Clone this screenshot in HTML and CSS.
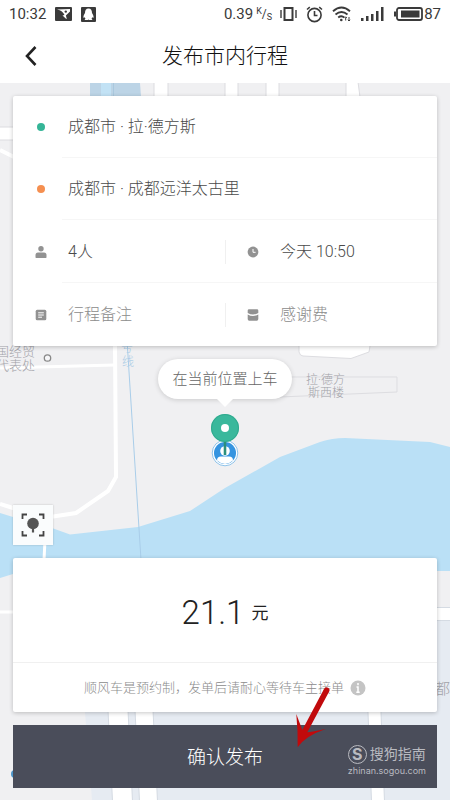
FILE: index.html
```html
<!DOCTYPE html>
<html lang="zh-CN">
<head>
<meta charset="utf-8">
<meta name="viewport" content="width=device-width, initial-scale=1">
<title>发布市内行程</title>
<link rel="stylesheet" href="styles.css">
</head>
<body>
<div class="status">
  <div class="status-group status-left">
    <span>10:32</span>
    <svg width="17" height="14" viewBox="0 0 17 14"><rect width="17" height="14" rx="1" fill="#3a3a3a"/><path d="M2 2.500C6 3 8.500 5.500 9.500 8L7.500 8.500l3.500 3.300.8.200-.9-3.500L15 4.500V2z" fill="#fff"/><circle cx="10.800" cy="4.600" r="1.200" fill="#3a3a3a"/></svg>
    <svg class="qq" width="15" height="15" viewBox="0 0 15 15"><rect width="15" height="15" rx="1" fill="#3a3a3a"/><path d="M7.500 1.500C5 1.500 4 3.500 4 6 3 7.500 2 9.500 2.600 11l1.200-.8.600 1.500-.9 1.300h3.300l.7-.4.700.4h3.300l-.9-1.300.6-1.500 1.200.8c.6-1.500-.4-3.500-1.400-5 0-2.500-1-4.500-3.500-4.500z" fill="#fff"/></svg>
  </div>
  <div class="status-group">
    <span>0.39</span>
    <span class="rate"><sup>K</sup>/<sub>S</sub></span>
    <svg class="vibrate" width="17" height="16" viewBox="0 0 17 16" fill="none" stroke="#3a3a3a"><path d="M4.500 2h8v12h-8z" stroke-width="2"/><path d="M1 4v8M16 4v8" stroke-width="1.400"/></svg>
    <svg class="alarm" width="17" height="17" viewBox="0 0 17 17" fill="none" stroke="#3a3a3a" stroke-width="1.600"><circle cx="8.500" cy="9" r="6.600"/><path d="M8.500 5v4.500h3M1 3.500L3.800 1.200M16 3.500l-2.800-2.300"/></svg>
    <svg class="wifi" width="20" height="16" viewBox="0 0 20 16" fill="none" stroke="#3a3a3a" stroke-width="1.900"><path d="M1 5.200Q9.500-2 18 5.200M3.500 8.500q6-4.800 12 0M6.200 11.500q3.300-2.500 6 0"/><circle cx="9.300" cy="14" r="1.300" fill="#3a3a3a" stroke="none"/><path d="M13.700 14.500v-3M17 11v4M12.500 12l1.200-1.200 1.200 1.200M15.800 13.800L17 15l1.200-1.200" stroke-width="1"/></svg>
    <svg class="signal" width="23" height="14" viewBox="0 0 23 14" fill="#3a3a3a"><path d="M0 11h2.500v3H0zM5 9h2.500v5H5zM10 7h2.500v7H10zM15 4h2.500v10H15zM20 0h2.500v14H20z"/></svg>
    <svg class="battery" width="29" height="14" viewBox="0 0 29 14"><rect x="3" y="1" width="25" height="12" rx="2" fill="none" stroke="#3a3a3a" stroke-width="1.800"/><path d="M0 4.500h2v5H0zM7 3.500h18.500v7H7z" fill="#3a3a3a"/></svg>
    <span class="percent">87</span>
  </div>
</div>
<header class="bar">
  <button class="back" type="button" aria-label="返回"><svg width="12" height="20" viewBox="0 0 12 20" fill="none" stroke="#222" stroke-width="2.600"><path d="M10.500 1L2 10l8.500 9"/></svg></button>
  <h1>发布市内行程</h1>
</header>
<main class="stage">
  <svg class="map" viewBox="0 83 450 717" preserveAspectRatio="xMidYMin slice" aria-hidden="true">
    <path fill="#f0f0f2" d="M0 83h450v717H0z"/>
    <path fill="#bcd4e6" d="M90 83h50l1 14H90z"/>
    <path fill="#c2e2f5" d="M101 83h10v14h-10z"/>
    <path stroke="#a9c8de" d="M113.500 83v14"/>
    <g fill="#fff" stroke="#dcdce0"><path d="M154 82h14v15h-14zM225 82h13v15h-13zM266 82h13v15h-13zM346 82h12l2 15h-14zM-1 127h15v13H-1z"/></g>
    <path fill="#bae0f6" d="M0 513l13 4 39 11 18 6.500 68-7.500 26-8 26-8 35-23 55-31 40-15q12-4 25-4l85 4 20 5v124H437L200 560 13 574 0 578z"/>
    <g fill="none" stroke="#fff" stroke-width="4"><path d="M0 150l14 7M115 346l1 131-8 14-32 22-26 4-37-9-13-4"/><path d="M45 540l-1 20M0 368l115-3M0 612h14" stroke-width="3"/></g>
    <path stroke="#a9cde9" d="M127 340l14 220"/>
    <path fill="#fff" stroke="#dddde1" d="M299 340v12q1 4 4 4l48 2.500 18-6.500 2-12z"/>
    <path fill="none" stroke="#dddde1" d="M280 377h117v15l-117 5"/>
    <path fill="#e6ebf2" d="M84 700h366v100H92zM430 621h20v90h-20z"/>
    <path fill="#fff" stroke="#d5dbe3" d="M430 607.500h21v13h-21zM107.500 700h20l5 101h-20zM134.500 700h18l5 101h-18zM367.500 700h13l4 101h-13z"/>
    <circle cx="15" cy="774" r="4" fill="#4b94c8"/>
    <circle cx="47.500" cy="358" r="3.200" fill="#f6f6f8" stroke="#888" stroke-width="1.300"/>
    <g class="map-label"><text x="-4" y="356">国经贸</text><text x="-4" y="370">代表处</text></g>
    <g class="map-label map-small"><text x="306" y="384">拉·德方</text><text x="308" y="397">斯西楼</text></g>
    <g class="map-label map-small map-metro"><text x="121" y="352">号</text><text x="122" y="366">线</text></g>
    <text class="map-label map-district" x="435" y="694">都</text>
  </svg>

  <section class="card trip">
    <button class="row" type="button"><span class="icon"><i class="dot dot-from"></i></span><span>成都市 · 拉·德方斯</span></button>
    <button class="row" type="button"><span class="icon"><i class="dot dot-to"></i></span><span>成都市 · 成都远洋太古里</span></button>
    <div class="pair">
      <button class="row" type="button"><span class="icon"><svg width="12" height="12" viewBox="0 0 12 12" fill="#929292"><circle cx="6" cy="2.800" r="2.700"/><path d="M1 12Q.5 12 .5 11V9q0-2.500 2.500-2.500h6q2.500 0 2.500 2.500v2q0 1-.5 1z"/></svg></span><span>4人</span></button>
      <button class="row" type="button"><span class="icon"><svg width="12" height="12" viewBox="0 0 12 12"><circle cx="6" cy="6" r="5.400" fill="#929292"/><path d="M6 3v3.300h2.600" fill="none" stroke="#fff"/></svg></span><span>今天 10:50</span></button>
    </div>
    <div class="pair">
      <button class="row hint" type="button"><span class="icon"><svg width="12" height="12" viewBox="0 0 12 12"><rect x=".7" y=".7" width="10.600" height="10.600" rx="1.500" fill="#929292"/><path d="M3.200 3.800h5.600M3.200 6h5.600M3.200 8.200H7" stroke="#fff"/></svg></span><span>行程备注</span></button>
      <button class="row hint" type="button"><span class="icon"><svg width="12" height="12" viewBox="0 0 12 12" fill="#929292"><path d="M.7 1.500Q.7.300 2 .3h8q1.300 0 1.300 1.200V4Q6 7 .7 4zM.7 5.400Q6 8.400 11.300 5.400V10q0 1.700-1.500 1.700H2.200Q.7 11.700.7 10z"/></svg></span><span>感谢费</span></button>
    </div>
  </section>

  <div class="pickup">
    <div class="bubble">在当前位置上车</div>
    <svg class="pin" width="32" height="56" viewBox="0 0 32 56"><circle cx="16" cy="41" r="12.800" fill="#fff" stroke="#8fc3ea"/><circle cx="16" cy="41" r="11" fill="#3594e0"/><circle cx="16" cy="39" r="4.800" fill="#fff"/><path d="M8 48.500q0-4 4-4h8q4 0 4 4-8 7-16 0z" fill="#fff"/><path d="M16 28v15" stroke="#2c8f7c" stroke-width="2.600"/><circle cx="16" cy="16" r="14" fill="#3ab89c"/><circle cx="16" cy="16" r="13.500" fill="none" stroke="#31aa8f"/><circle cx="16" cy="16" r="4" fill="#fff"/></svg>
  </div>

  <button class="locate" type="button" aria-label="定位"><svg width="24" height="24" viewBox="0 0 24 24"><path d="M1.500 6V1.500H6M18 1.500h4.500V6M22.500 18v4.500H18M6 22.500H1.500V18" fill="none" stroke="#444" stroke-width="1.800"/><circle cx="12" cy="10.500" r="5.800" fill="#555"/><path d="M12 14v5.500" stroke="#555" stroke-width="2.200"/></svg></button>

  <section class="card fare">
    <p class="price"><strong>21.1</strong><span>元</span></p>
    <p class="note"><span>顺风车是预约制，发单后请耐心等待车主接单</span><svg width="16" height="16" viewBox="0 0 16 16"><circle cx="8" cy="8" r="7.500" fill="#c4c4c4"/><path d="M8 3v2.200M6.500 7H8v5M6.300 12.200h3.400" fill="none" stroke="#fff" stroke-width="1.500"/></svg></p>
  </section>

  <div class="action">
    <button class="confirm" type="button">确认发布</button>
    <div class="watermark"><div class="brand"><i>S</i><span>搜狗指南</span></div><div class="site">zhinan.sogou.com</div></div>
    <svg class="arrow" width="38" height="62" viewBox="0 0 38 62"><path d="M30 3q1.500-2.500 4-1.200 2.300 1.200 1.300 3.500L13.300 46.300Q18 46 31.700 43 11 50 3.700 61.300 4 45 2.300 28L8.300 44z" fill="#c10a0c"/></svg>
  </div>
</main>
</body>
</html>
```
FILE: styles.css
```css
* { box-sizing: border-box; }

body {
  margin: 0;
  min-height: 100vh;
  display: flex;
  flex-direction: column;
  background: #fff;
  color: #4a4a4a;
  font: 300 16px/24px Roboto, "Noto Sans CJK SC", sans-serif;
}

button {
  margin: 0;
  padding: 0;
  border: 0;
  background: none;
  color: inherit;
  font: inherit;
  cursor: pointer;
}

svg { display: block; flex: none; }
p, h1 { margin: 0; }

.status {
  display: flex;
  justify-content: space-between;
  padding: 0 9px;
  color: #3a3a3a;
  font-size: 15px;
  font-weight: 400;
  line-height: 28px;
}

.status-group { display: flex; align-items: center; }
.status-left { gap: 9px; }
.rate { margin: 0 8px 0 3px; font-size: 12px; line-height: 16px; }
.rate sup, .rate sub { font-size: 9px; line-height: 0; }
.rate sup { vertical-align: 4px; }
.rate sub { vertical-align: -2px; }
.alarm, .wifi, .signal { margin-left: 9px; }
.battery { margin-left: 10px; }
.percent { margin-left: 1px; }

.bar {
  display: grid;
  grid-template-columns: 64px 1fr 64px;
  align-items: center;
  height: 55px;
}

.back { display: flex; align-items: center; height: 48px; padding-left: 25px; }

.bar h1 {
  color: #111;
  font-size: 21px;
  font-weight: 300;
  line-height: 32px;
  text-align: center;
}

.stage {
  position: relative;
  flex: 1;
  display: flex;
  flex-direction: column;
  padding: 13px 13px 12px;
  overflow: hidden;
}

.stage > * { position: relative; }

.stage > .map {
  position: absolute;
  inset: 0;
  width: 100%;
  height: 100%;
}

.map-label { fill: #a2a2a8; font-size: 13px; }
.map-small { font-size: 12px; }
.map-metro { fill: #a9cbe6; }
.map-district { font-size: 15px; }

.card {
  background: #fff;
  border-radius: 2px;
  box-shadow: 0 1px 4px rgba(0, 0, 0, 0.22);
}

.row {
  position: relative;
  display: flex;
  align-items: center;
  width: 100%;
  height: 62px;
  padding-left: 22px;
  gap: 21px;
  text-align: left;
}

.trip > :not(:last-child)::after {
  content: "";
  position: absolute;
  right: 0;
  bottom: 0;
  left: 49px;
  height: 1px;
  background: #f6f6f6;
}

.icon { display: flex; justify-content: center; width: 12px; }
.dot { width: 8px; height: 8px; border-radius: 50%; }
.dot-from { background: #35b597; }
.dot-to { background: #f58f50; }

.pair { position: relative; display: grid; grid-template-columns: 1fr 1fr; }
.pair .row { height: 63px; }
.pair .row + .row { background: linear-gradient(#f0f0f0, #f0f0f0) left center / 1px 24px no-repeat; }
.hint { color: #8c8c8c; }

.pickup {
  display: flex;
  flex-direction: column;
  align-items: center;
  gap: 13px;
  margin-top: 13px;
}

.bubble {
  position: relative;
  padding: 8px 14px;
  border-radius: 20px;
  background: #fff;
  color: #666;
  font-size: 15px;
  box-shadow: 0 1px 5px rgba(0, 0, 0, 0.16);
}

.bubble::after {
  content: "";
  position: absolute;
  top: 100%;
  left: 50%;
  margin-left: -8px;
  border: 8px solid transparent;
  border-top-color: #fff;
  border-bottom: 0;
}

.locate {
  display: flex;
  align-items: center;
  justify-content: center;
  width: 40px;
  height: 40px;
  margin-top: auto;
  background: #fafcfd;
  box-shadow: 0 0 2px rgba(0, 0, 0, 0.2);
}

.fare { margin-top: 13px; }

.price {
  display: flex;
  align-items: center;
  justify-content: center;
  gap: 7px;
  padding: 35px 0 29px;
  color: #222;
  line-height: 40px;
}

.price strong { font-size: 33px; font-weight: 300; }
.price span { font-size: 17px; font-weight: 400; }

.note {
  display: flex;
  align-items: center;
  justify-content: center;
  gap: 6px;
  height: 50px;
  border-top: 1px solid #f0f0f0;
  color: #8c8c8c;
  font-size: 13px;
}

.action { margin-top: 13px; }

.confirm {
  display: block;
  width: 100%;
  height: 63px;
  padding-top: 2px;
  background: #4a4d5a;
  color: #fff;
  font-size: 19px;
}

.watermark {
  position: absolute;
  right: 11px;
  bottom: 10px;
  color: #b9bac0;
  font-weight: 400;
  pointer-events: none;
}

.brand {
  display: flex;
  align-items: center;
  gap: 3px;
  font-size: 14px;
  line-height: 20px;
}

.brand i {
  width: 19px;
  height: 19px;
  border: 1px solid;
  border-radius: 50%;
  font: 700 16px/17px Inter, sans-serif;
  text-align: center;
}

.site { font: 400 9px/14px Inter, sans-serif; text-align: right; }

.arrow { position: absolute; top: -39px; right: 105px; pointer-events: none; }
```
